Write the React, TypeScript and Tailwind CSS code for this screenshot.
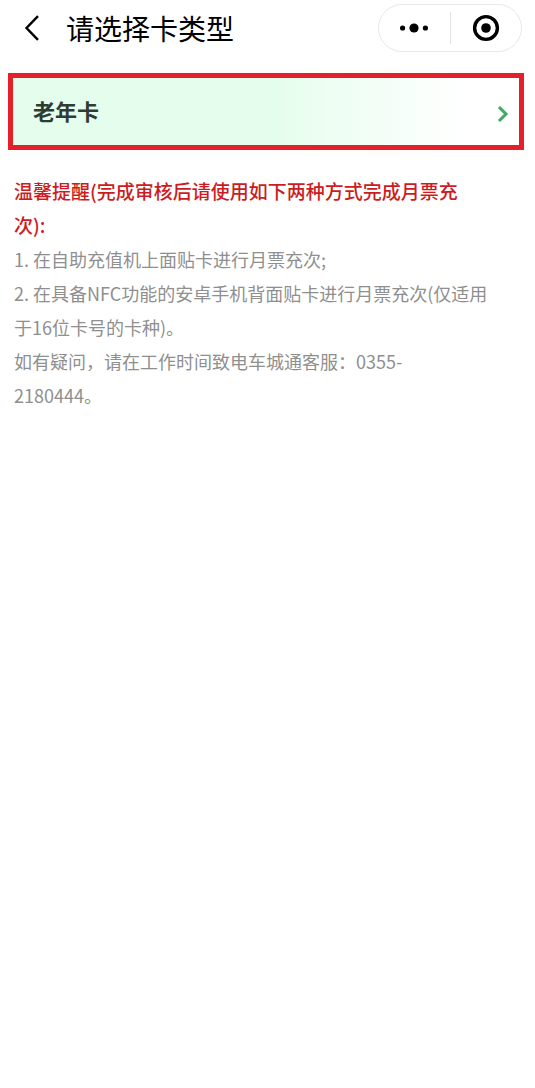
const cards = [{ id: "senior", name: "老年卡" }];

const notes = [
    "1. 在自助充值机上面贴卡进行月票充次;",
    "2. 在具备NFC功能的安卓手机背面贴卡进行月票充次(仅适用于16位卡号的卡种)。",
    "如有疑问，请在工作时间致电车城通客服：0355-2180444。",
];

function Header() {
    return (
        <header className="flex items-center pt-1 pl-5 pr-[13px]">
            <button type="button" aria-label="返回" className="flex h-12 w-6 items-center justify-center">
                <svg width="24" height="28" viewBox="0 0 24 28" fill="none" stroke="#000" strokeWidth="2.4">
                    <path d="M18 2.2 6.5 14 18 25.8" />
                </svg>
            </button>
            <h1 className="ml-5.5 text-[28px] leading-12 text-black">请选择卡类型</h1>

            {/* Mini program capsule */}
            <div className="ml-auto flex h-12 w-36 items-center rounded-full border border-[#e8e8e8] bg-white">
                <button type="button" aria-label="更多" className="flex h-full flex-1 items-center justify-center">
                    <svg width="30" height="12" viewBox="0 0 30 12" fill="#000">
                        <circle cx="3.6" cy="6" r="2.6" />
                        <circle cx="15" cy="6" r="4.6" />
                        <circle cx="26.4" cy="6" r="2.6" />
                    </svg>
                </button>
                <span className="h-8 w-px bg-[#e2e2e2]" />
                <button type="button" aria-label="关闭" className="flex h-full flex-1 items-center justify-center">
                    <svg width="28" height="28" viewBox="0 0 28 28">
                        <circle cx="14" cy="14" r="11.4" fill="none" stroke="#000" strokeWidth="3.4" />
                        <circle cx="14" cy="14" r="4.8" fill="#000" />
                    </svg>
                </button>
            </div>
        </header>
    );
}

export default function App() {
    return (
        <div className="min-h-screen bg-white font-['Noto_Sans_CJK_SC',sans-serif]">
            <Header />
            <main>
                {/* Card types */}
                <div className="mt-[21px] mr-[11px] ml-2 shadow-[0_0_12px_rgba(0,0,0,0.03)]">
                    {cards.map((card) => (
                        <button
                            key={card.id}
                            type="button"
                            className="flex h-[77px] w-full items-center justify-between border-5 border-[#e4202a] bg-linear-to-r from-[#e4fdec] from-50% to-white to-90% pr-2.5 pl-5"
                        >
                            <span className="pb-1 text-[22px] leading-8 font-bold text-[#2f3b33]">{card.name}</span>
                            <svg
                                className="mt-1"
                                width="12"
                                height="18"
                                viewBox="0 0 12 18"
                                fill="none"
                                stroke="#3dab60"
                                strokeWidth="3"
                            >
                                <path d="m2 2 7 7-7 7" />
                            </svg>
                        </button>
                    ))}
                </div>

                {/* Reminder */}
                <section className="mt-6 pr-11.5 pl-3.5">
                    <h2 className="text-[19px] leading-[34px] font-medium text-[#cc1c22]">
                        温馨提醒(完成审核后请使用如下两种方式完成月票充次):
                    </h2>
                    {notes.map((note) => (
                        <p key={note} className="text-[18px] leading-[34px] text-[#8f8f8f]">
                            {note}
                        </p>
                    ))}
                </section>
            </main>
        </div>
    );
}
